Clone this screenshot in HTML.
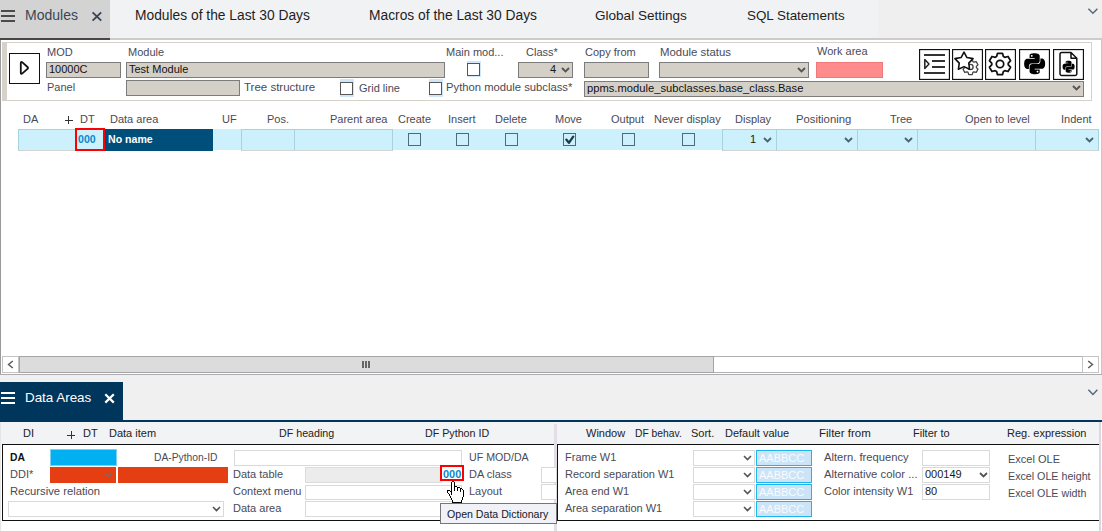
<!DOCTYPE html>
<html><head><meta charset="utf-8">
<style>
*{margin:0;padding:0;box-sizing:border-box}
html,body{width:1102px;height:531px;overflow:hidden;background:#fff;font-family:"Liberation Sans",sans-serif}
.a{position:absolute}
.t{position:absolute;font-size:11px;line-height:13px;white-space:nowrap;color:#4a4a56}
.tb{position:absolute;font-size:14px;line-height:16px;white-space:nowrap;color:#1e1e1e}
.inp{position:absolute;background:#d4d0c8;border:1px solid #7c7c7c}
.cb{position:absolute;width:13px;height:13px;border:1px solid #565656;background:transparent}
.cell{position:absolute;top:129px;height:22px;border:1px solid #a8d2df;border-bottom-color:#d4d4d4}
.wi{position:absolute;background:#fff;border:1px solid #d9d9d9}
svg{position:absolute;display:block}
</style></head><body>

<!-- ===== top tab bar ===== -->
<div class="a" style="left:0;top:0;width:1102px;height:38px;background:#efefef"></div>
<div class="a" style="left:110px;top:0;width:768px;height:38px;background:#f1f2f4"></div>
<div class="a" style="left:0;top:0;width:110px;height:38px;background:#d3d3d3"></div>
<div class="a" style="left:0;top:38px;width:1102px;height:2px;background:#cccccc"></div>
<div class="a" style="left:0;top:38px;width:110px;height:2px;background:#474747"></div>
<!-- hamburger -->
<div class="a" style="left:1px;top:10px;width:14px;height:2px;background:#4a4a4a"></div>
<div class="a" style="left:1px;top:15px;width:14px;height:2px;background:#4a4a4a"></div>
<div class="a" style="left:1px;top:20px;width:14px;height:2px;background:#4a4a4a"></div>
<div class="tb" style="left:25px;top:7px;color:#3c4654">Modules</div>
<svg style="left:91px;top:11px" width="12" height="11"><path d="M1.6 1.4L10.2 9.6M10.2 1.4L1.6 9.6" stroke="#3a4558" stroke-width="1.9"/></svg>
<div class="tb" style="left:135px;top:8px;font-size:13.8px">Modules of the Last 30 Days</div>
<div class="tb" style="left:369px;top:8px;font-size:13.8px">Macros of the Last 30 Days</div>
<div class="tb" style="left:595px;top:8px;font-size:13.55px">Global Settings</div>
<div class="tb" style="left:747px;top:8px;font-size:13.4px">SQL Statements</div>
<svg style="left:1087px;top:7px" width="12" height="8"><polyline points="1.4,1.7 5.9,6.2 10.4,1.7" stroke="#56687a" stroke-width="1.5" fill="none"/></svg>

<!-- page borders -->
<div class="a" style="left:0;top:40px;width:1px;height:335px;background:#9a9a9a"></div>
<div class="a" style="left:1101px;top:40px;width:1px;height:335px;background:#c8c8c8"></div>

<!-- ===== header panel ===== -->
<div class="a" style="left:2px;top:42px;width:1090px;height:59px;border:1px solid #d6d2ca;border-left:5px solid #d6d2ca"></div>
<div class="a" style="left:9px;top:53px;width:31px;height:31px;border:1px solid #111;background:#fff"></div>
<svg style="left:17px;top:60px" width="14" height="17"><path d="M3.8 3.2Q3.8 1.1 5.4 2.4L10.5 7Q11.5 7.9 10.5 8.8L5.4 13.4Q3.8 14.8 3.8 12.7Z" stroke="#111" stroke-width="1.8" fill="none" stroke-linejoin="round"/></svg>

<div class="t" style="left:47px;top:46px">MOD</div>
<div class="t" style="left:128px;top:46px">Module</div>
<div class="t" style="left:446px;top:46px">Main mod...</div>
<div class="t" style="left:526px;top:46px">Class*</div>
<div class="t" style="left:585px;top:46px">Copy from</div>
<div class="t" style="left:660px;top:46px;font-size:11.4px">Module status</div>
<div class="t" style="left:817px;top:45px">Work area</div>

<div class="inp" style="left:46px;top:62px;width:75px;height:16px"></div>
<div class="t" style="left:49px;top:63px;color:#111">10000C</div>
<div class="inp" style="left:126px;top:62px;width:319px;height:16px"></div>
<div class="t" style="left:129px;top:63px;color:#111">Test Module</div>
<div class="a" style="left:467px;top:61px;width:14px;height:16px;background:#cfe6fb"></div>
<div class="cb" style="left:467px;top:63px;width:13px;height:13px;background:#fff"></div>
<div class="inp" style="left:518px;top:62px;width:55px;height:16px"></div>
<div class="t" style="left:550px;top:63px;color:#1a1a1a">4</div>
<svg style="left:561px;top:67px" width="9" height="6"><polyline points="1,1 4.5,4.5 8,1" stroke="#555" stroke-width="1.9" fill="none"/></svg>
<div class="inp" style="left:584px;top:62px;width:65px;height:16px"></div>
<div class="inp" style="left:659px;top:62px;width:150px;height:16px"></div>
<svg style="left:797px;top:67px" width="9" height="6"><polyline points="1,1 4.5,4.5 8,1" stroke="#555" stroke-width="1.9" fill="none"/></svg>
<div class="a" style="left:816px;top:62px;width:67px;height:16px;background:#ff8c8c;border:1px solid #f07878"></div>

<div class="t" style="left:47px;top:81px">Panel</div>
<div class="inp" style="left:126px;top:80px;width:114px;height:16px"></div>
<div class="t" style="left:244px;top:81px;font-size:11.5px">Tree structure</div>
<div class="a" style="left:340px;top:79px;width:14px;height:18px;background:#cfe6fb"></div>
<div class="cb" style="left:340px;top:82px;background:#fff"></div>
<div class="t" style="left:359px;top:82px">Grid line</div>
<div class="a" style="left:429px;top:79px;width:14px;height:18px;background:#cfe6fb"></div>
<div class="cb" style="left:429px;top:82px;background:#fff"></div>
<div class="t" style="left:446px;top:81px;font-size:11.25px">Python module subclass*</div>
<div class="inp" style="left:584px;top:81px;width:500px;height:16px"></div>
<div class="t" style="left:587px;top:82px;color:#111;font-size:11.2px">ppms.module_subclasses.base_class.Base</div>
<svg style="left:1072px;top:85px" width="9" height="6"><polyline points="1,1 4.5,4.5 8,1" stroke="#555" stroke-width="1.9" fill="none"/></svg>

<!-- icon buttons -->
<svg style="left:919px;top:49px" width="31" height="31"><rect x="0.5" y="0.5" width="30" height="30" fill="#fff" stroke="#111" stroke-width="1.3"/>
<rect x="5" y="5" width="21" height="2" fill="#333"/><rect x="13" y="11" width="13" height="2" fill="#333"/><rect x="13" y="17" width="13" height="2" fill="#333"/><rect x="5" y="23" width="21" height="2" fill="#333"/>
<path d="M5.8 10.6L10 15L5.8 19.4Z" fill="none" stroke="#222" stroke-width="1.5" stroke-linejoin="round"/></svg>
<svg style="left:952px;top:49px" width="31" height="31"><rect x="0.5" y="0.5" width="30" height="30" fill="#fff" stroke="#111" stroke-width="1.3"/>
<path d="M20.90 12.61 L20.25 10.40 L16.75 10.40 L16.10 12.61 L15.03 13.23 L12.80 12.68 L11.04 15.72 L12.63 17.38 L12.63 18.62 L11.04 20.28 L12.80 23.32 L15.03 22.77 L16.10 23.39 L16.75 25.60 L20.25 25.60 L20.90 23.39 L21.97 22.77 L24.20 23.32 L25.96 20.28 L24.37 18.62 L24.37 17.38 L25.96 15.72 L24.20 12.68 L21.97 13.23Z" fill="#fff" stroke="#444" stroke-width="1.3" stroke-linejoin="round"/>
<circle cx="18.5" cy="18" r="2.6" fill="none" stroke="#444" stroke-width="1.3"/>
<path d="M12.00 3.10 L9.06 8.55 L2.96 9.66 L7.24 14.15 L6.42 20.29 L12.00 17.60 L17.58 20.29 L16.76 14.15 L21.04 9.66 L14.94 8.55Z" fill="#fff" stroke="#111" stroke-width="1.6" stroke-linejoin="round"/></svg>
<svg style="left:985px;top:49px" width="31" height="31"><rect x="0.5" y="0.5" width="30" height="30" fill="#fff" stroke="#111" stroke-width="1.3"/>
<path d="M18.38 7.42 L17.47 4.28 L12.53 4.28 L11.62 7.42 L10.12 8.29 L6.96 7.50 L4.48 11.78 L6.75 14.13 L6.75 15.87 L4.48 18.22 L6.96 22.50 L10.12 21.71 L11.62 22.58 L12.53 25.72 L17.47 25.72 L18.38 22.58 L19.88 21.71 L23.04 22.50 L25.52 18.22 L23.25 15.87 L23.25 14.13 L25.52 11.78 L23.04 7.50 L19.88 8.29Z" fill="none" stroke="#111" stroke-width="1.75" stroke-linejoin="round"/>
<circle cx="15" cy="15" r="3.7" fill="none" stroke="#111" stroke-width="1.75"/></svg>
<svg style="left:1019px;top:49px" width="31" height="31"><rect x="0.5" y="0.5" width="30" height="30" fill="#fff" stroke="#111" stroke-width="1.3"/>
<g transform="translate(5.2 4.3) scale(0.87)"><path fill="#000" d="M14.25.18l.9.2.73.26.59.3.45.32.34.34.25.34.16.33.1.3.04.26.02.2-.01.13V8.5l-.05.63-.13.55-.21.46-.26.38-.3.31-.33.25-.35.19-.35.14-.33.1-.3.07-.26.04-.21.02H8.77l-.69.05-.59.14-.5.22-.41.27-.33.32-.27.35-.2.36-.15.37-.1.35-.07.32-.04.27-.02.21v3.06H3.17l-.21-.03-.28-.07-.32-.12-.35-.18-.36-.26-.36-.36-.35-.46-.32-.59-.28-.73-.21-.88-.14-1.05-.05-1.23.06-1.22.16-1.04.24-.87.32-.71.36-.57.4-.44.42-.33.42-.24.4-.16.36-.1.32-.05.24-.01h.16l.06.01h8.16v-.83H6.18l-.01-2.75-.02-.37.05-.34.11-.31.17-.28.25-.26.31-.23.38-.2.44-.18.51-.15.58-.12.64-.1.71-.06.77-.04.84-.02 1.27.05zm-6.3 1.98l-.23.33-.08.41.08.41.23.34.33.22.41.09.41-.09.33-.22.23-.34.08-.41-.08-.41-.23-.33-.33-.22-.41-.09-.41.09zm13.09 3.95l.28.06.32.12.35.18.36.27.36.35.35.47.32.59.28.73.21.88.14 1.04.05 1.23-.06 1.23-.16 1.04-.24.86-.32.71-.36.57-.4.45-.42.33-.42.24-.4.16-.36.09-.32.05-.24.02-.16-.01h-8.22v.82h5.84l.01 2.76.02.36-.05.34-.11.31-.17.29-.25.25-.31.24-.38.2-.44.17-.51.15-.58.13-.64.09-.71.07-.77.04-.84.01-1.27-.04-1.07-.14-.9-.2-.73-.25-.59-.3-.45-.33-.34-.34-.25-.34-.16-.33-.1-.3-.04-.25-.02-.2.01-.13v-5.34l.05-.64.13-.54.21-.46.26-.38.3-.32.33-.24.35-.2.35-.14.33-.1.3-.06.26-.04.21-.02.13-.01h5.84l.69-.05.59-.14.5-.21.41-.28.33-.32.27-.35.2-.36.15-.36.1-.35.07-.32.04-.28.02-.21V6.07h2.09l.14.01zm-6.47 14.25l-.23.33-.08.41.08.41.23.33.33.23.41.08.41-.08.33-.23.23-.33.08-.41-.08-.41-.23-.33-.33-.23-.41-.08-.41.08z"/></g></svg>
<svg style="left:1053px;top:49px" width="31" height="31"><rect x="0.5" y="0.5" width="30" height="30" fill="#fff" stroke="#111" stroke-width="1.3"/>
<path d="M8.8 3.5H18L23.8 9.3V24.8A1.8 1.8 0 0 1 22 26.6H8.8A1.8 1.8 0 0 1 7 24.8V5.3A1.8 1.8 0 0 1 8.8 3.5Z M18 3.5V9.3H23.8" fill="none" stroke="#111" stroke-width="1.5" stroke-linejoin="round"/>
<g transform="translate(9.6 11.7) scale(0.5)"><path fill="#000" d="M14.25.18l.9.2.73.26.59.3.45.32.34.34.25.34.16.33.1.3.04.26.02.2-.01.13V8.5l-.05.63-.13.55-.21.46-.26.38-.3.31-.33.25-.35.19-.35.14-.33.1-.3.07-.26.04-.21.02H8.77l-.69.05-.59.14-.5.22-.41.27-.33.32-.27.35-.2.36-.15.37-.1.35-.07.32-.04.27-.02.21v3.06H3.17l-.21-.03-.28-.07-.32-.12-.35-.18-.36-.26-.36-.36-.35-.46-.32-.59-.28-.73-.21-.88-.14-1.05-.05-1.23.06-1.22.16-1.04.24-.87.32-.71.36-.57.4-.44.42-.33.42-.24.4-.16.36-.1.32-.05.24-.01h.16l.06.01h8.16v-.83H6.18l-.01-2.75-.02-.37.05-.34.11-.31.17-.28.25-.26.31-.23.38-.2.44-.18.51-.15.58-.12.64-.1.71-.06.77-.04.84-.02 1.27.05zm-6.3 1.98l-.23.33-.08.41.08.41.23.34.33.22.41.09.41-.09.33-.22.23-.34.08-.41-.08-.41-.23-.33-.33-.22-.41-.09-.41.09zm13.09 3.95l.28.06.32.12.35.18.36.27.36.35.35.47.32.59.28.73.21.88.14 1.04.05 1.23-.06 1.23-.16 1.04-.24.86-.32.71-.36.57-.4.45-.42.33-.42.24-.4.16-.36.09-.32.05-.24.02-.16-.01h-8.22v.82h5.84l.01 2.76.02.36-.05.34-.11.31-.17.29-.25.25-.31.24-.38.2-.44.17-.51.15-.58.13-.64.09-.71.07-.77.04-.84.01-1.27-.04-1.07-.14-.9-.2-.73-.25-.59-.3-.45-.33-.34-.34-.25-.34-.16-.33-.1-.3-.04-.25-.02-.2.01-.13v-5.34l.05-.64.13-.54.21-.46.26-.38.3-.32.33-.24.35-.2.35-.14.33-.1.3-.06.26-.04.21-.02.13-.01h5.84l.69-.05.59-.14.5-.21.41-.28.33-.32.27-.35.2-.36.15-.36.1-.35.07-.32.04-.28.02-.21V6.07h2.09l.14.01zm-6.47 14.25l-.23.33-.08.41.08.41.23.33.33.23.41.08.41-.08.33-.23.23-.33.08-.41-.08-.41-.23-.33-.33-.23-.41-.08-.41.08z"/></g></svg>

<!-- ===== grid ===== -->
<div class="t" style="left:23px;top:113px">DA</div>
<div class="a" style="left:65px;top:120px;width:8px;height:1px;background:#333"></div>
<div class="a" style="left:68px;top:116px;width:1px;height:8px;background:#333"></div>
<div class="t" style="left:80px;top:113px">DT</div>
<div class="t" style="left:110px;top:113px">Data area</div>
<div class="t" style="left:222px;top:113px">UF</div>
<div class="t" style="left:267px;top:113px">Pos.</div>
<div class="t" style="left:330px;top:113px">Parent area</div>
<div class="t" style="left:398px;top:113px">Create</div>
<div class="t" style="left:448px;top:113px">Insert</div>
<div class="t" style="left:495px;top:113px">Delete</div>
<div class="t" style="left:555px;top:113px">Move</div>
<div class="t" style="left:611px;top:113px">Output</div>
<div class="t" style="left:654px;top:113px">Never display</div>
<div class="t" style="left:735px;top:113px">Display</div>
<div class="t" style="left:796px;top:113px;font-size:11.3px">Positioning</div>
<div class="t" style="left:890px;top:113px">Tree</div>
<div class="t" style="left:965px;top:113px">Open to level</div>
<div class="t" style="left:1061px;top:113px">Indent</div>

<div class="a" style="left:18px;top:129px;width:1081px;height:21px;background:#ccf0fc"></div>
<div class="cell" style="left:18px;width:58px"></div>
<div class="a" style="left:75px;top:128px;width:30px;height:23px;border:2px solid #ff0000"></div>
<div class="t" style="left:78px;top:133px;color:#0b88cc;font-weight:bold;font-size:10.6px">000</div>
<div class="a" style="left:105px;top:129px;width:108px;height:22px;background:#004f7b"></div>
<div class="t" style="left:108px;top:133px;color:#fff;font-weight:bold;font-size:10.6px">No name</div>
<div class="cell" style="left:241px;width:54px"></div>
<div class="cell" style="left:294px;width:99px"></div>
<div class="cb" style="left:408px;top:133px;border-color:#4f6b78"></div>
<div class="cb" style="left:456px;top:133px;border-color:#4f6b78"></div>
<div class="cb" style="left:505px;top:133px;border-color:#4f6b78"></div>
<div class="cb" style="left:563px;top:133px;border-color:#4f6b78"></div>
<svg style="left:565px;top:135px" width="10" height="10"><polyline points="1.3,4.6 3.9,7.8 8.2,1.6" stroke="#1d3b4b" stroke-width="2.3" fill="none" stroke-linecap="round" stroke-linejoin="round"/></svg>
<div class="cb" style="left:622px;top:133px;border-color:#4f6b78"></div>
<div class="cb" style="left:682px;top:133px;border-color:#4f6b78"></div>
<div class="cell" style="left:722px;width:55px"></div>
<div class="t" style="left:750px;top:133px;color:#1a1a1a">1</div>
<svg style="left:763px;top:137px" width="9" height="6"><polyline points="1,1 4.5,4.5 8,1" stroke="#4b6470" stroke-width="1.9" fill="none"/></svg>
<div class="cell" style="left:776px;width:82px"></div>
<svg style="left:844px;top:137px" width="9" height="6"><polyline points="1,1 4.5,4.5 8,1" stroke="#4b6470" stroke-width="1.9" fill="none"/></svg>
<div class="cell" style="left:857px;width:61px"></div>
<svg style="left:904px;top:137px" width="9" height="6"><polyline points="1,1 4.5,4.5 8,1" stroke="#4b6470" stroke-width="1.9" fill="none"/></svg>
<div class="cell" style="left:917px;width:119px"></div>
<div class="cell" style="left:1035px;width:64px"></div>
<svg style="left:1085px;top:137px" width="9" height="6"><polyline points="1,1 4.5,4.5 8,1" stroke="#4b6470" stroke-width="1.9" fill="none"/></svg>

<!-- scrollbar -->
<div class="a" style="left:2px;top:356px;width:1097px;height:17px;background:#fff;border-top:1px solid #b0b0b0;border-bottom:1px solid #b0b0b0"></div>
<div class="a" style="left:2px;top:356px;width:17px;height:17px;border:1px solid #c4c4c4;background:#fff"></div>
<svg style="left:7px;top:360px" width="7" height="9"><polyline points="5.8,1 1.5,4.5 5.8,8" stroke="#555" stroke-width="1.4" fill="none"/></svg>
<div class="a" style="left:19px;top:356px;width:695px;height:17px;background:#dcdcdc;border:1px solid #a4a4a4"></div>
<div class="a" style="left:362px;top:361px;width:2px;height:7px;background:#666"></div>
<div class="a" style="left:365px;top:361px;width:2px;height:7px;background:#666"></div>
<div class="a" style="left:368px;top:361px;width:2px;height:7px;background:#666"></div>
<div class="a" style="left:1082px;top:356px;width:17px;height:17px;border:1px solid #c4c4c4;background:#fff"></div>
<svg style="left:1087px;top:360px" width="7" height="9"><polyline points="1.2,1 5.5,4.5 1.2,8" stroke="#555" stroke-width="1.4" fill="none"/></svg>
<div class="a" style="left:0;top:374px;width:1102px;height:1px;background:#a9abb0"></div><div class="a" style="left:0;top:375px;width:1102px;height:1px;background:#dde0e6"></div>

<!-- ===== lower section ===== -->
<div class="a" style="left:0;top:375px;width:1102px;height:156px;background:#f0f0f0"></div>
<svg style="left:1087px;top:388px" width="12" height="9"><polyline points="1.4,1.8 5.9,6.5 10.4,1.8" stroke="#56687a" stroke-width="1.5" fill="none"/></svg>
<div class="a" style="left:0;top:382px;width:123px;height:39px;background:#00365c"></div>
<div class="a" style="left:0;top:420px;width:1102px;height:2px;background:#00365c"></div>
<div class="a" style="left:1px;top:392px;width:14px;height:2px;background:#fff"></div>
<div class="a" style="left:1px;top:397px;width:14px;height:2px;background:#fff"></div>
<div class="a" style="left:1px;top:402px;width:14px;height:2px;background:#fff"></div>
<div class="tb" style="left:25px;top:390px;color:#fff;font-size:13.4px">Data Areas</div>
<svg style="left:104px;top:393px" width="12" height="11"><path d="M1.3 1.3L9.8 9.6M9.8 1.3L1.3 9.6" stroke="#fff" stroke-width="2.2"/></svg>

<div class="a" style="left:0;top:422px;width:1102px;height:109px;background:#fff"></div>
<div class="a" style="left:1px;top:422px;width:1098px;height:22px;background:#f2f3f5"></div>
<div class="a" style="left:0;top:422px;width:1px;height:109px;background:#e6e6e6"></div>
<div class="t" style="left:23px;top:427px;color:#222">DI</div>
<div class="a" style="left:67px;top:435px;width:8px;height:1px;background:#333"></div>
<div class="a" style="left:71px;top:431px;width:1px;height:8px;background:#333"></div>
<div class="t" style="left:83px;top:427px;color:#222">DT</div>
<div class="t" style="left:109px;top:427px;color:#222">Data item</div>
<div class="t" style="left:279px;top:427px;color:#222;font-size:10.7px">DF heading</div>
<div class="t" style="left:425px;top:427px;color:#222;font-size:10.7px">DF Python ID</div>
<div class="t" style="left:586px;top:427px;color:#222">Window</div>
<div class="t" style="left:635px;top:427px;color:#222;font-size:10.3px">DF behav.</div>
<div class="t" style="left:691px;top:427px;color:#222">Sort.</div>
<div class="t" style="left:725px;top:427px;color:#222">Default value</div>
<div class="t" style="left:819px;top:427px;color:#222;font-size:11.5px">Filter from</div>
<div class="t" style="left:913px;top:427px;color:#222">Filter to</div>
<div class="t" style="left:1007px;top:427px;color:#222">Reg. expression</div>

<div class="a" style="left:1099px;top:422px;width:2px;height:109px;background:#dcd8e2"></div>
<!-- separator -->
<div class="a" style="left:554px;top:424px;width:3px;height:107px;background:#e4dce6"></div>

<!-- left frame -->
<div class="a" style="left:2px;top:444px;width:552px;height:77px;border:1px solid #111;border-right:none"></div>
<div class="t" style="left:10px;top:451px;color:#111;font-weight:bold;font-size:10.3px">DA</div>
<div class="a" style="left:50px;top:449px;width:67px;height:17px;background:#00b0f0;border:1px solid #7fd0f0"></div>
<div class="t" style="left:154px;top:451px;font-size:10.3px">DA-Python-ID</div>
<div class="wi" style="left:234px;top:450px;width:228px;height:16px"></div>
<div class="t" style="left:469px;top:451px;font-size:10.65px">UF MOD/DA</div>

<div class="t" style="left:10px;top:468px">DDI*</div>
<div class="a" style="left:50px;top:467px;width:66px;height:16px;background:#e43e12"></div>
<svg style="left:104px;top:472px" width="9" height="6"><polyline points="1,1 4.5,4.5 8,1" stroke="#7a6a66" stroke-width="1.8" fill="none"/></svg>
<div class="a" style="left:118px;top:467px;width:110px;height:16px;background:#e43e12"></div>
<div class="t" style="left:233px;top:468px">Data table</div>
<div class="a" style="left:305px;top:467px;width:137px;height:16px;background:#ececec;border:1px solid #dcdcdc"></div>
<div class="a" style="left:440px;top:465px;width:24px;height:16px;border:2px solid #ff0000;background:#fff"></div>
<div class="t" style="left:443px;top:468px;color:#0b88cc;font-weight:bold">000</div>
<div class="t" style="left:469px;top:468px">DA class</div>
<div class="wi" style="left:541px;top:467px;width:16px;height:16px"></div>

<div class="t" style="left:10px;top:485px;font-size:11.25px">Recursive relation</div>
<div class="t" style="left:233px;top:485px">Context menu</div>
<div class="wi" style="left:305px;top:485px;width:157px;height:15px"></div>
<div class="t" style="left:469px;top:485px">Layout</div>
<div class="wi" style="left:541px;top:484px;width:16px;height:16px"></div>

<div class="wi" style="left:8px;top:501px;width:216px;height:16px"></div>
<svg style="left:212px;top:506px" width="9" height="6"><polyline points="1,1 4.5,4.5 8,1" stroke="#555" stroke-width="1.6" fill="none"/></svg>
<div class="t" style="left:233px;top:502px">Data area</div>
<div class="wi" style="left:305px;top:501px;width:157px;height:16px"></div>

<!-- right frame -->
<div class="a" style="left:557px;top:444px;width:542px;height:77px;border:1px solid #111;border-right:none"></div>
<div class="t" style="left:565px;top:451px">Frame W1</div>
<div class="t" style="left:565px;top:468px">Record separation W1</div>
<div class="t" style="left:565px;top:485px">Area end W1</div>
<div class="t" style="left:565px;top:502px">Area separation W1</div>
<div class="wi" style="left:693px;top:450px;width:62px;height:16px"></div>
<div class="wi" style="left:693px;top:467px;width:62px;height:16px"></div>
<div class="wi" style="left:693px;top:484px;width:62px;height:16px"></div>
<div class="wi" style="left:693px;top:501px;width:62px;height:16px"></div>
<svg style="left:743px;top:455px" width="9" height="6"><polyline points="1,1 4.5,4.5 8,1" stroke="#555" stroke-width="1.6" fill="none"/></svg>
<svg style="left:743px;top:472px" width="9" height="6"><polyline points="1,1 4.5,4.5 8,1" stroke="#555" stroke-width="1.6" fill="none"/></svg>
<svg style="left:743px;top:489px" width="9" height="6"><polyline points="1,1 4.5,4.5 8,1" stroke="#555" stroke-width="1.6" fill="none"/></svg>
<svg style="left:743px;top:506px" width="9" height="6"><polyline points="1,1 4.5,4.5 8,1" stroke="#555" stroke-width="1.6" fill="none"/></svg>
<div class="a" style="left:756px;top:450px;width:56px;height:16px;background:#cce4f7;border:1px solid #1db4f0"></div>
<div class="a" style="left:756px;top:467px;width:56px;height:16px;background:#cce4f7;border:1px solid #1db4f0"></div>
<div class="a" style="left:756px;top:484px;width:56px;height:16px;background:#cce4f7;border:1px solid #1db4f0"></div>
<div class="a" style="left:756px;top:501px;width:56px;height:16px;background:#cce4f7;border:1px solid #1db4f0"></div>
<div class="t" style="left:759px;top:452px;color:#f8fbff">AABBCC</div>
<div class="t" style="left:759px;top:469px;color:#f8fbff">AABBCC</div>
<div class="t" style="left:759px;top:486px;color:#f8fbff">AABBCC</div>
<div class="t" style="left:759px;top:503px;color:#f8fbff">AABBCC</div>

<div class="t" style="left:824px;top:451px;font-size:11.2px">Altern. frequency</div>
<div class="t" style="left:824px;top:468px;font-size:11.3px">Alternative color ...</div>
<div class="t" style="left:824px;top:485px">Color intensity W1</div>
<div class="wi" style="left:922px;top:450px;width:68px;height:16px"></div>
<div class="wi" style="left:922px;top:467px;width:68px;height:16px"></div>
<div class="wi" style="left:922px;top:484px;width:68px;height:16px"></div>
<div class="t" style="left:925px;top:468px;color:#1a1a1a">000149</div>
<svg style="left:979px;top:472px" width="9" height="6"><polyline points="1,1 4.5,4.5 8,1" stroke="#555" stroke-width="1.8" fill="none"/></svg>
<div class="t" style="left:925px;top:485px;color:#1a1a1a">80</div>
<div class="t" style="left:1008px;top:453px">Excel OLE</div>
<div class="t" style="left:1008px;top:470px;font-size:10.7px">Excel OLE height</div>
<div class="t" style="left:1008px;top:487px;font-size:10.7px">Excel OLE width</div>

<!-- tooltip -->
<div class="a" style="left:440px;top:503px;width:117px;height:21px;background:#f1f2f7;border:1px solid #767676"></div>
<div class="t" style="left:447px;top:508px;color:#151525;font-size:10.6px">Open Data Dictionary</div>


<!-- cursor -->
<svg style="left:445px;top:479px" width="22" height="25" shape-rendering="crispEdges"><rect x="3" y="12" width="15" height="1" fill="#fff"/><rect x="6" y="17" width="12" height="1" fill="#fff"/><rect x="5" y="15" width="13" height="1" fill="#fff"/><rect x="8" y="23" width="8" height="1" fill="#fff"/><rect x="7" y="10" width="10" height="1" fill="#fff"/><rect x="7" y="5" width="2" height="1" fill="#fff"/><rect x="7" y="8" width="7" height="1" fill="#fff"/><rect x="3" y="11" width="15" height="1" fill="#fff"/><rect x="6" y="18" width="11" height="1" fill="#fff"/><rect x="4" y="14" width="14" height="1" fill="#fff"/><rect x="5" y="16" width="13" height="1" fill="#fff"/><rect x="3" y="13" width="15" height="1" fill="#fff"/><rect x="8" y="22" width="8" height="1" fill="#fff"/><rect x="7" y="9" width="9" height="1" fill="#fff"/><rect x="7" y="20" width="10" height="1" fill="#fff"/><rect x="7" y="7" width="4" height="1" fill="#fff"/><rect x="7" y="4" width="2" height="1" fill="#fff"/><rect x="8" y="21" width="8" height="1" fill="#fff"/><rect x="7" y="19" width="10" height="1" fill="#fff"/><rect x="7" y="3" width="2" height="1" fill="#fff"/><rect x="7" y="6" width="2" height="1" fill="#fff"/><rect x="2" y="11" width="1" height="1"/><rect x="2" y="12" width="1" height="1"/><rect x="2" y="13" width="1" height="1"/><rect x="3" y="11" width="1" height="1"/><rect x="3" y="14" width="1" height="1"/><rect x="4" y="11" width="1" height="1"/><rect x="4" y="15" width="1" height="1"/><rect x="4" y="16" width="1" height="1"/><rect x="5" y="12" width="1" height="1"/><rect x="5" y="17" width="1" height="1"/><rect x="5" y="18" width="1" height="1"/><rect x="6" y="3" width="1" height="1"/><rect x="6" y="4" width="1" height="1"/><rect x="6" y="5" width="1" height="1"/><rect x="6" y="6" width="1" height="1"/><rect x="6" y="7" width="1" height="1"/><rect x="6" y="8" width="1" height="1"/><rect x="6" y="9" width="1" height="1"/><rect x="6" y="10" width="1" height="1"/><rect x="6" y="11" width="1" height="1"/><rect x="6" y="12" width="1" height="1"/><rect x="6" y="13" width="1" height="1"/><rect x="6" y="14" width="1" height="1"/><rect x="6" y="15" width="1" height="1"/><rect x="6" y="19" width="1" height="1"/><rect x="6" y="20" width="1" height="1"/><rect x="7" y="2" width="1" height="1"/><rect x="7" y="21" width="1" height="1"/><rect x="7" y="22" width="1" height="1"/><rect x="7" y="23" width="1" height="1"/><rect x="8" y="2" width="1" height="1"/><rect x="8" y="23" width="1" height="1"/><rect x="9" y="3" width="1" height="1"/><rect x="9" y="4" width="1" height="1"/><rect x="9" y="5" width="1" height="1"/><rect x="9" y="6" width="1" height="1"/><rect x="9" y="7" width="1" height="1"/><rect x="9" y="8" width="1" height="1"/><rect x="9" y="9" width="1" height="1"/><rect x="9" y="10" width="1" height="1"/><rect x="9" y="11" width="1" height="1"/><rect x="9" y="23" width="1" height="1"/><rect x="10" y="7" width="1" height="1"/><rect x="10" y="23" width="1" height="1"/><rect x="11" y="7" width="1" height="1"/><rect x="11" y="23" width="1" height="1"/><rect x="12" y="8" width="1" height="1"/><rect x="12" y="9" width="1" height="1"/><rect x="12" y="10" width="1" height="1"/><rect x="12" y="11" width="1" height="1"/><rect x="12" y="23" width="1" height="1"/><rect x="13" y="8" width="1" height="1"/><rect x="13" y="23" width="1" height="1"/><rect x="14" y="8" width="1" height="1"/><rect x="14" y="23" width="1" height="1"/><rect x="15" y="9" width="1" height="1"/><rect x="15" y="10" width="1" height="1"/><rect x="15" y="11" width="1" height="1"/><rect x="15" y="12" width="1" height="1"/><rect x="15" y="23" width="1" height="1"/><rect x="16" y="9" width="1" height="1"/><rect x="16" y="21" width="1" height="1"/><rect x="16" y="22" width="1" height="1"/><rect x="16" y="23" width="1" height="1"/><rect x="17" y="10" width="1" height="1"/><rect x="17" y="18" width="1" height="1"/><rect x="17" y="19" width="1" height="1"/><rect x="17" y="20" width="1" height="1"/><rect x="18" y="11" width="1" height="1"/><rect x="18" y="12" width="1" height="1"/><rect x="18" y="13" width="1" height="1"/><rect x="18" y="14" width="1" height="1"/><rect x="18" y="15" width="1" height="1"/><rect x="18" y="16" width="1" height="1"/><rect x="18" y="17" width="1" height="1"/></svg>
</body></html>
